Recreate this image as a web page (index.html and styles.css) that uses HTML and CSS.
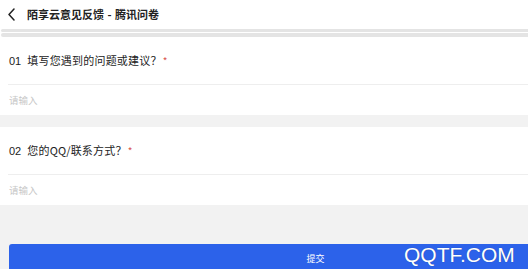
FILE: index.html
```html
<!DOCTYPE html>
<html lang="zh">
<head>
<meta charset="utf-8">
<title>陌享云意见反馈 - 腾讯问卷</title>
<link rel="stylesheet" href="styles.css">
</head>
<body>
<div class="page">
  <header class="topbar">
    <svg class="back" width="9" height="13" viewBox="0 0 9 13"><path d="M7 1 L2 6.5 L7 12" fill="none" stroke="#222" stroke-width="1.5" stroke-linecap="round" stroke-linejoin="round"/></svg>
    <span class="title">陌享云意见反馈 - 腾讯问卷</span>
  </header>
  <div class="bars">
    <div class="bar"></div>
    <div class="bar bar2"></div>
  </div>
  <section class="card">
    <div class="q"><span class="num">01</span><span class="qtext">填写您遇到的问题或建议？</span><span class="req">*</span></div>
    <div class="input">请输入</div>
  </section>
  <div class="gap"></div>
  <section class="card">
    <div class="q"><span class="num">02</span><span class="qtext">您的QQ/联系方式？</span><span class="req">*</span></div>
    <div class="input">请输入</div>
  </section>
  <div class="spacer"></div>
  <div class="btnwrap">
    <button class="submit">提交</button>
    <span class="watermark">QQTF.COM</span>
  </div>
</div>
</body>
</html>
```
FILE: styles.css
```css
* { box-sizing: border-box; }
html, body { margin: 0; padding: 0; }
body {
  background: #f2f2f2;
  font-family: "Noto Sans CJK SC", "Liberation Sans", sans-serif;
  width: 528px;
  height: 269px;
  overflow: hidden;
}
.page { display: flex; flex-direction: column; }
.topbar {
  height: 29px;
  background: #fff;
  display: flex;
  align-items: center;
  padding-left: 7px;
}
.back { display: block; margin-top: -1px; }
.title {
  margin-left: 11px;
  font-size: 11px;
  font-weight: 700;
  color: #222;
  line-height: 14px;
  margin-top: -1px;
  word-spacing: 1px;
}
.bars {
  background: #fff;
  display: flex;
  flex-direction: column;
  gap: 1px;
  padding-left: 1px;
}
.bar { height: 3px; background: #e4e4e4; border-radius: 2px 0 0 2px; }
.bar2 { height: 4px; }
.card {
  background: #fff;
  height: 78px;
  padding-left: 8px;
  display: flex;
  flex-direction: column;
}
.q {
  height: 48px;
  padding-top: 16px;
  padding-left: 1px;
  font-size: 11px;
  line-height: 14px;
  color: #222;
  display: flex;
  align-items: baseline;
  border-bottom: 1px solid #eeeeee;
}
.num { font-family: "Liberation Sans", sans-serif; font-size: 11px; margin-right: 6px; }
.qtext { font-family: "Noto Sans CJK SC", sans-serif; letter-spacing: 0.2px; }
.req { color: #d9534f; margin-left: 1px; font-size: 10px; }
.input {
  height: 30px;
  padding-left: 1px;
  padding-top: 8px;
  font-size: 9.5px;
  line-height: 14px;
  color: #c8c8c8;
}
.gap { height: 12px; }
.spacer { height: 39px; }
.btnwrap {
  position: relative;
  padding-left: 9px;
  height: 25px;
}
.submit {
  display: block;
  width: 100%;
  height: 30px;
  border: 0;
  border-radius: 3px 0 0 0;
  background: #2c62ea;
  color: #fff;
  font-family: "Noto Sans CJK SC", sans-serif;
  font-size: 9px;
  padding: 10px 0 14px 94px;
  line-height: 1;
  text-align: center;
  vertical-align: top;
}
.watermark {
  position: absolute;
  left: 404px;
  top: 0px;
  font-family: "Liberation Sans", sans-serif;
  font-size: 21px;
  line-height: 22px;
  color: #fff;
  text-shadow: 0 0 1px rgba(0,0,0,0.35);
}
```
